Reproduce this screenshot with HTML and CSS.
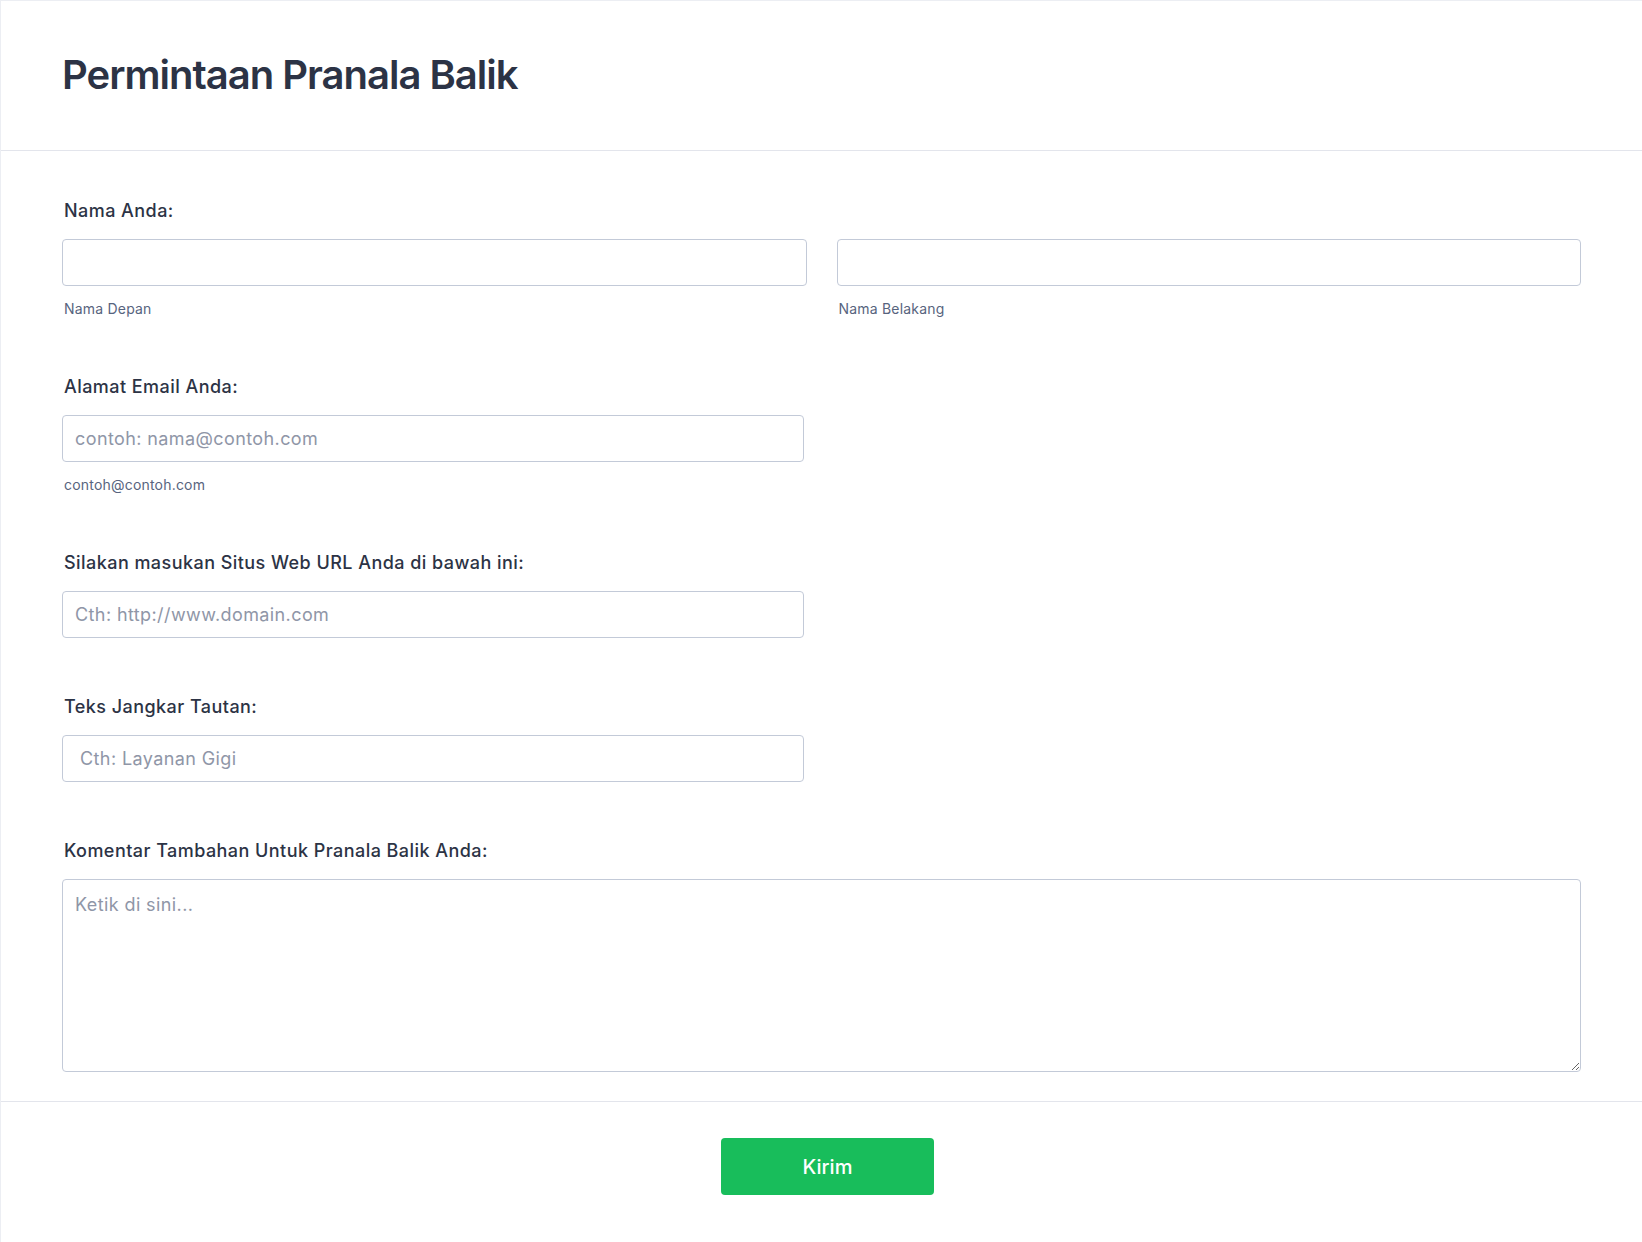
FILE: index.html
```
<!DOCTYPE html>
<html lang="id">
<head>
  <meta charset="UTF-8">
  <title>Permintaan Pranala Balik</title>
  <meta name="viewport" content="width=device-width, initial-scale=1.0">
  <link rel="stylesheet" href="styles.css">
</head>

<body>

<form class="form-card" onsubmit="return false;">
  <div class="form-header">
    <h1>Permintaan Pranala Balik</h1>
  </div>

  <div class="form-body">
    <div class="field">
      <label class="field-label">Nama Anda:</label>
      <div class="name-row">
        <div class="name-col">
          <input type="text" class="input">
          <span class="sublabel">Nama Depan</span>
        </div>
        <div class="name-col">
          <input type="text" class="input">
          <span class="sublabel">Nama Belakang</span>
        </div>
      </div>
    </div>

    <div class="field">
      <label class="field-label">Alamat Email Anda:</label>
      <input type="email" class="input half" placeholder="contoh: nama@contoh.com">
      <span class="sublabel">contoh@contoh.com</span>
    </div>

    <div class="field">
      <label class="field-label">Silakan masukan Situs Web URL Anda di bawah ini:</label>
      <input type="text" class="input half" placeholder="Cth: http://www.domain.com">
    </div>

    <div class="field">
      <label class="field-label">Teks Jangkar Tautan:</label>
      <input type="text" class="input half wide-pad" placeholder="Cth: Layanan Gigi">
    </div>

    <div class="field">
      <label class="field-label">Komentar Tambahan Untuk Pranala Balik Anda:</label>
      <textarea class="input textarea" placeholder="Ketik di sini..."></textarea>
    </div>
  </div>

  <div class="form-footer">
    <button type="submit" class="submit">Kirim</button>
  </div>
</form>

</body>
</html>
```

FILE: styles.css
```
body {
  margin: 0;
  padding: 0;
  background: #fff;
  font-family: Inter, "Noto Sans", sans-serif;
  color: #2c3345;
}

.form-card {
  border-top: 1px solid #eceef3;
  border-left: 1px solid #eceef3;
  min-height: 1241px;
  box-sizing: border-box;
}

.form-header {
  padding: 50px 61px 51px;
  border-bottom: 1px solid #e3e5ec;
}

.form-header h1 {
  margin: 0;
  font-size: 40px;
  line-height: 48px;
  font-weight: 600;
  letter-spacing: -1px;
  color: #2c3345;
}

.form-body {
  padding: 49px 61px 29px;
  display: flex;
  flex-direction: column;
  gap: 58px;
}

.field {
  display: flex;
  flex-direction: column;
  align-items: flex-start;
}

.field-label {
  font-size: 18px;
  line-height: 22px;
  font-weight: 500;
  letter-spacing: 0.45px;
  padding-left: 2px;
  margin-bottom: 17px;
}

.name-row {
  display: flex;
  gap: 30px;
  width: 100%;
}

.name-col {
  flex: 1;
  display: flex;
  flex-direction: column;
}

.input {
  box-sizing: border-box;
  width: 100%;
  height: 47px;
  border: 1px solid #c3cad8;
  border-radius: 4px;
  padding: 0 12px;
  font-family: inherit;
  font-size: 18px;
  letter-spacing: 0.4px;
  color: #2c3345;
  background: #fff;
  outline: none;
}

.input::placeholder {
  color: #8f96a7;
}

.half {
  width: 742px;
}

.wide-pad {
  padding-left: 17px;
}

.textarea {
  height: 193px;
  padding: 14px 12px;
  line-height: 22px;
  resize: vertical;
}

.sublabel {
  margin-top: 14px;
  padding-left: 2px;
  font-size: 14px;
  line-height: 18px;
  letter-spacing: 0.2px;
  color: #57647e;
}

.form-footer {
  border-top: 1px solid #e3e5ec;
  padding: 36px 0 47px 12px;
  display: flex;
  justify-content: center;
}

.submit {
  width: 213px;
  height: 57px;
  border: none;
  border-radius: 4px;
  background: #18bd5b;
  color: #fff;
  font-family: inherit;
  font-size: 20px;
  font-weight: 500;
  cursor: pointer;
}

.submit:hover {
  background: #16aa52;
}
```
